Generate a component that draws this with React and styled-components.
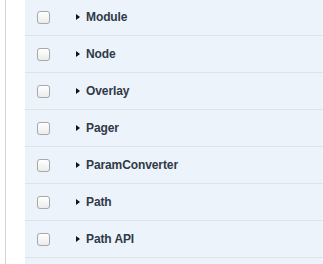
import styled, { createGlobalStyle } from 'styled-components';

const GlobalStyle = createGlobalStyle`
  html, body {
    margin: 0;
    padding: 0;
    background: #ffffff;
    overflow: hidden;
  }
  body {
    font-family: "Liberation Sans", Arial, sans-serif;
  }
`;

const Page = styled.div`
  display: flex;
  height: 264px;
  padding-left: 5px;
`;

const Rail = styled.div`
  width: 19px;
  border-left: 1px solid #d4d4d4;
  background: #ffffff;
  flex-shrink: 0;
`;

const List = styled.div`
  flex: 1;
  background: #edf3fb;
  margin-top: -1px;
`;

const Row = styled.div`
  display: flex;
  align-items: center;
  height: 36px;
  border-bottom: 1px solid #dfe3e7;
`;

const CheckCell = styled.div`
  width: 51px;
  display: flex;
  padding-left: 12px;
  box-sizing: border-box;
`;

const Check = styled.input.attrs({ type: 'checkbox' })`
  appearance: none;
  margin: 0;
  width: 13px;
  height: 13px;
  border: 1px solid #a9a9a9;
  border-radius: 3px;
  box-sizing: border-box;
  background: linear-gradient(#ffffff, #ececec);
  box-shadow: inset 0 1px 0 #ffffff, 0 0 1px rgba(0, 0, 0, 0.1);
`;

const Toggle = styled.span`
  width: 0;
  height: 0;
  border-top: 3.5px solid transparent;
  border-bottom: 3.5px solid transparent;
  border-left: 4px solid #111;
  margin-right: 6px;
`;

const Name = styled.span`
  font-size: 12px;
  font-weight: bold;
  color: #2f3a47;
  letter-spacing: -0.1px;
`;

const modules = ['Module', 'Node', 'Overlay', 'Pager', 'ParamConverter', 'Path', 'Path API'];

export default function App() {
  return (
    <>
      <GlobalStyle />
      <Page>
        <Rail />
        <List>
          {modules.map((m) => (
            <Row key={m}>
              <CheckCell>
                <Check />
              </CheckCell>
              <Toggle />
              <Name>{m}</Name>
            </Row>
          ))}
        </List>
      </Page>
    </>
  );
}
